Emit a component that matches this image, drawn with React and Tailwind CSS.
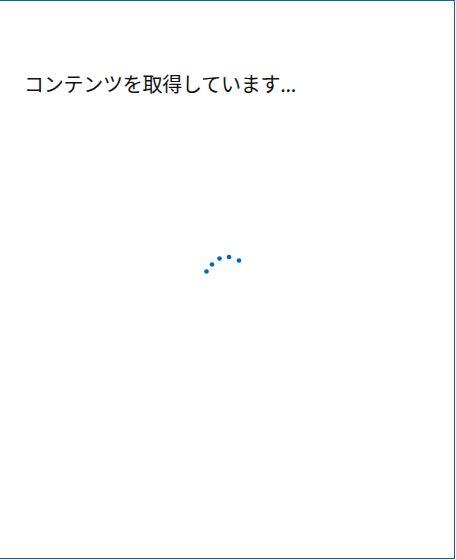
export default function App() {
  // loading spinner dots (Windows-style progress ring, frozen frame)
  const dots = [
    [205.5, 271.5],
    [211, 264.5],
    [218.5, 258.5],
    [228, 257],
    [238, 260.5],
  ];

  return (
    <div className="w-[456px] h-[560px] bg-white">
      <div
        className="w-[455px] h-[559px] border-t border-r border-b border-[#0067c0] flex flex-col"
        style={{ fontFamily: '"Noto Sans CJK JP", "Noto Sans", sans-serif' }}
      >
        {/* Heading */}
        <div className="pl-[24px] pt-[65px] text-[20px] leading-[36px] text-[#111] tracking-[-0.25px]">
          コンテンツを取得しています...
        </div>

        {/* Spinner */}
        <div className="flex justify-center pt-[148px]">
          <svg width="50" height="28" viewBox="198 250 50 28" className="ml-[-6px]">
            {dots.map(([cx, cy], i) => (
              <circle key={i} cx={cx} cy={cy} r="2.3" fill="#0067c0" />
            ))}
          </svg>
        </div>
      </div>
    </div>
  );
}
